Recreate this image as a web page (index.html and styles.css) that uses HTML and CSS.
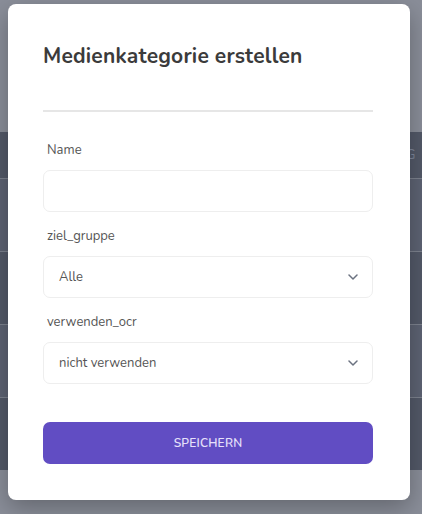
FILE: index.html
```
<!DOCTYPE html>
<html lang="de">
<head>
<meta charset="utf-8">
<link rel="stylesheet" href="styles.css">
</head>
<body>
<div class="page">
  <div class="topbar"></div>
  <div class="table">
    <div class="thead"><span class="th">Bearbeitung</span></div>
    <div class="row light"></div>
    <div class="row dark"></div>
    <div class="row light"></div>
    <div class="row dark"></div>
  </div>
  <div class="bottom"></div>
</div>
<div class="modal">
  <h2 class="title">Medienkategorie erstellen</h2>
  <div class="divider"></div>
  <form class="form">
    <label class="label">Name</label>
    <div class="input"></div>
    <label class="label">ziel_gruppe</label>
    <div class="input select"><span>Alle</span>
      <svg class="chev" width="10" height="6" viewBox="0 0 10 6"><path d="M1 1l4 4 4-4" fill="none" stroke="#6b7280" stroke-width="1.5" stroke-linecap="round" stroke-linejoin="round"/></svg>
    </div>
    <label class="label">verwenden_ocr</label>
    <div class="input select"><span>nicht verwenden</span>
      <svg class="chev" width="10" height="6" viewBox="0 0 10 6"><path d="M1 1l4 4 4-4" fill="none" stroke="#6b7280" stroke-width="1.5" stroke-linecap="round" stroke-linejoin="round"/></svg>
    </div>
    <div class="btn">SPEICHERN</div>
  </form>
</div>
</body>
</html>
```
FILE: styles.css
```
* { box-sizing: border-box; }
html, body { margin: 0; padding: 0; }
body {
  width: 422px; height: 514px; overflow: hidden;
  font-family: "Nunito", "Lato", "Open Sans", sans-serif;
  background: #8a8e99;
  position: relative;
}
.page { display: flex; flex-direction: column; height: 514px; }
.topbar { height: 132px; background: #8a8e99; }
.table { display: flex; flex-direction: column; }
.thead {
  height: 47px; background: #535968; border-bottom: 1px solid #7d828e;
  display: flex; align-items: center; justify-content: flex-end; padding-right: 6px;
}
.th { color: #7f889c; font-size: 13px; text-transform: uppercase; letter-spacing: .5px; }
.row { height: 73px; border-bottom: 1px solid #7d828e; }
.row.light { background: #5d6373; }
.row.dark { background: #535968; }
.row:last-child { border-bottom: 0; height: 72px; }
.bottom { flex: 1; background: #8a8e99; }

.modal {
  position: absolute; left: 8px; top: 4px; width: 402px; height: 496px;
  background: #fff; border-radius: 8px;
  box-shadow: 0 8px 24px rgba(0,0,0,.28);
  padding: 38px 37px 36px 35px;
}
.title {
  margin: 0; font-size: 21px; line-height: 28px; font-weight: 700; color: #3b3b3b;
  letter-spacing: 0.2px;
}
.divider { margin-top: 40px; height: 2px; background: #e6e6e6; }
.form { margin-top: 28px; display: flex; flex-direction: column; }
.label {
  display: block; font-size: 13px; line-height: 20px; color: #555; padding-left: 4px;
  margin-bottom: 10px;
}
.input {
  height: 42px; border: 1px solid #eeeeee; border-radius: 7px; margin-bottom: 14px;
}
.select {
  display: flex; align-items: center; justify-content: space-between;
  padding: 0 14px 0 15px; font-size: 13px; color: #555;
}
.chev { display: block; }
.btn {
  margin-top: 24px; height: 42px; border-radius: 7px; background: #614dc3;
  color: #e6e0fa; font-size: 12px; font-weight: 600; letter-spacing: .2px;
  display: flex; align-items: center; justify-content: center;
}
```
